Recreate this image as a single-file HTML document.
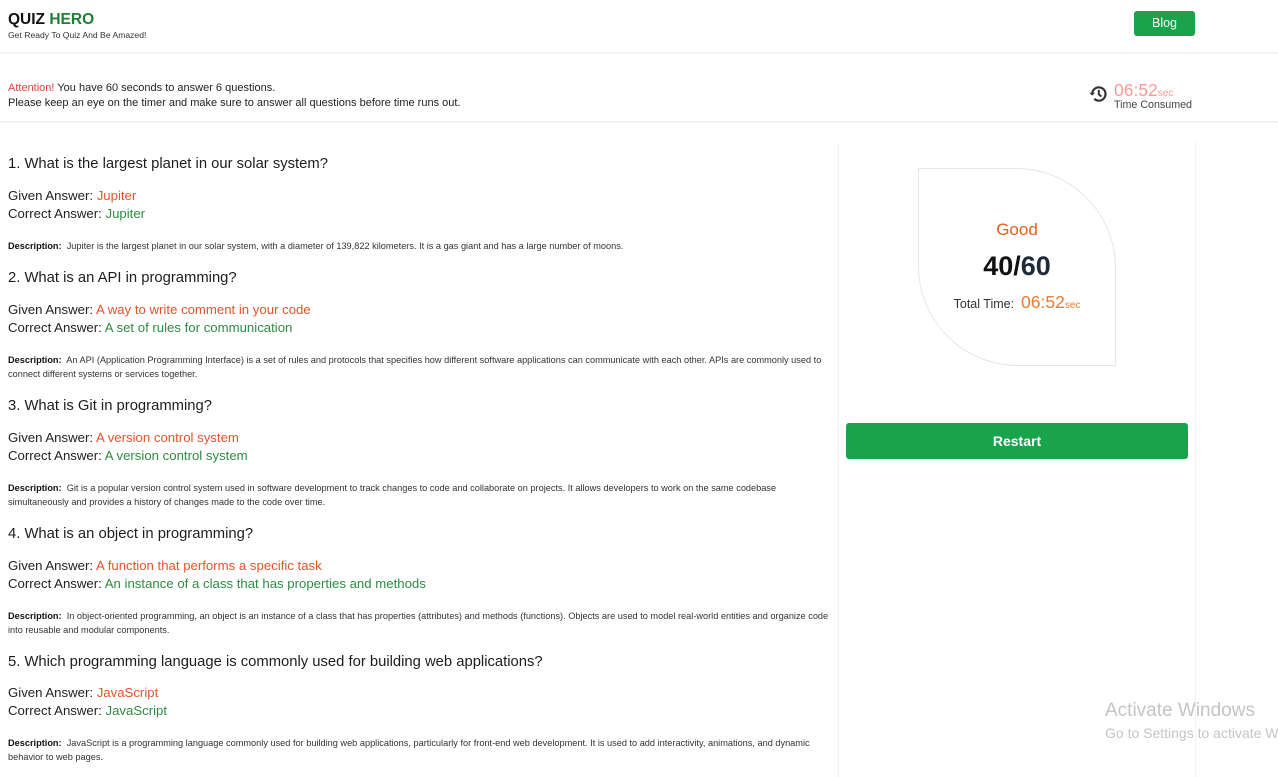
<!DOCTYPE html>
<html><head><meta charset="utf-8"><style>
*{margin:0;padding:0;box-sizing:border-box}
body{width:1278px;height:777px;overflow:hidden;background:#fff;font-family:"Liberation Sans",Arial,sans-serif;color:#222;position:relative}
.a{position:absolute;white-space:nowrap}
.q{font-size:14.8px;color:#1d1d1d}
.ans{font-size:13.2px;color:#222}
.g{color:#e0552b}.c{color:#2e8b43}
.d{font-size:9.2px;color:#333;line-height:14px;white-space:normal;width:830px}
.d b{color:#111}
</style></head><body>
<div class="a" style="left:8px;top:11px;font-size:15.5px;font-weight:bold;color:#111">QUIZ <span style="color:#1e7e34">HERO</span></div>
<div class="a" style="left:8px;top:30px;font-size:8.6px;color:#333">Get Ready To Quiz And Be Amazed!</div>
<div class="a" style="left:1134px;top:11px;width:61px;height:25px;background:#19a34a;border-radius:3px;color:#fff;font-size:12.5px;text-align:center;line-height:25px">Blog</div>
<div class="a" style="left:0;top:52px;width:1278px;height:2px;background:#f3f3f3"></div>
<div class="a" style="left:8px;top:81px;font-size:11px;color:#222;line-height:15px"><span style="color:#d9443f">Attention!</span> You have 60 seconds to answer 6 questions.<br>Please keep an eye on the timer and make sure to answer all questions before time runs out.</div>
<svg class="a" style="left:1088px;top:84px" width="20" height="20" viewBox="0 0 24 24"><path d="M5 12a8 8 0 1 1 2.5 5.8" fill="none" stroke="#333" stroke-width="2.6"/><path d="M1.5 10.5L5 14l3.5-3.5z" fill="#333"/><path d="M13 7v5.5l3 2.5" fill="none" stroke="#333" stroke-width="2.4"/></svg>
<div class="a" style="left:1114px;top:80px;font-size:17.5px;color:#f59a9a">06:52<span style="font-size:10px">sec</span></div>
<div class="a" style="left:1114px;top:99px;font-size:10.7px;color:#444">Time Consumed</div>
<div class="a" style="left:0;top:121px;width:1278px;height:2px;background:#f3f3f3"></div>
<div class="a" style="left:838px;top:142px;width:1px;height:635px;background:#f2f2f2"></div>
<div class="a" style="left:1195px;top:142px;width:1px;height:635px;background:#f2f2f2"></div>

<div class="a q" style="left:8px;top:156px">1. What is the largest planet in our solar system?</div>
<div class="a ans" style="left:8px;top:188px">Given Answer: <span class="g">Jupiter</span></div>
<div class="a ans" style="left:8px;top:206px">Correct Answer: <span class="c">Jupiter</span></div>
<div class="a d" style="left:8px;top:239px"><b>Description:</b>&nbsp; Jupiter is the largest planet in our solar system, with a diameter of 139,822 kilometers. It is a gas giant and has a large number of moons.</div>

<div class="a q" style="left:8px;top:270px">2. What is an API in programming?</div>
<div class="a ans" style="left:8px;top:302px">Given Answer: <span class="g">A way to write comment in your code</span></div>
<div class="a ans" style="left:8px;top:320px">Correct Answer: <span class="c">A set of rules for communication</span></div>
<div class="a d" style="left:8px;top:353px"><b>Description:</b>&nbsp; An API (Application Programming Interface) is a set of rules and protocols that specifies how different software applications can communicate with each other. APIs are commonly used to connect different systems or services together.</div>

<div class="a q" style="left:8px;top:398px">3. What is Git in programming?</div>
<div class="a ans" style="left:8px;top:430px">Given Answer: <span class="g">A version control system</span></div>
<div class="a ans" style="left:8px;top:448px">Correct Answer: <span class="c">A version control system</span></div>
<div class="a d" style="left:8px;top:481px"><b>Description:</b>&nbsp; Git is a popular version control system used in software development to track changes to code and collaborate on projects. It allows developers to work on the same codebase simultaneously and provides a history of changes made to the code over time.</div>

<div class="a q" style="left:8px;top:526px">4. What is an object in programming?</div>
<div class="a ans" style="left:8px;top:558px">Given Answer: <span class="g">A function that performs a specific task</span></div>
<div class="a ans" style="left:8px;top:576px">Correct Answer: <span class="c">An instance of a class that has properties and methods</span></div>
<div class="a d" style="left:8px;top:609px"><b>Description:</b>&nbsp; In object-oriented programming, an object is an instance of a class that has properties (attributes) and methods (functions). Objects are used to model real-world entities and organize code into reusable and modular components.</div>

<div class="a q" style="left:8px;top:654px">5. Which programming language is commonly used for building web applications?</div>
<div class="a ans" style="left:8px;top:685px">Given Answer: <span class="g">JavaScript</span></div>
<div class="a ans" style="left:8px;top:703px">Correct Answer: <span class="c">JavaScript</span></div>
<div class="a d" style="left:8px;top:736px"><b>Description:</b>&nbsp; JavaScript is a programming language commonly used for building web applications, particularly for front-end web development. It is used to add interactivity, animations, and dynamic behavior to web pages.</div>

<div class="a" style="left:918px;top:168px;width:198px;height:198px;border:1px solid #e6e6e6;border-radius:0 100px 0 100px"></div>
<div class="a" style="left:918px;top:220px;width:198px;text-align:center;font-size:17px;color:#e0611f">Good</div>
<div class="a" style="left:918px;top:251px;width:198px;text-align:center;font-size:27px;font-weight:bold;color:#111">40/<span style="color:#1f2a3a">60</span></div>
<div class="a" style="left:918px;top:292px;width:198px;text-align:center;font-size:12.5px;color:#333">Total Time:&nbsp; <span style="font-size:17.5px;color:#f07a2a">06:52<span style="font-size:10px">sec</span></span></div>
<div class="a" style="left:846px;top:423px;width:342px;height:36px;background:#19a34a;border-radius:3px;color:#fff;font-size:14px;font-weight:bold;text-align:center;line-height:36px">Restart</div>

<div class="a" style="left:1105px;top:700px;font-size:19px;color:#c4c4c4">Activate Windows</div>
<div class="a" style="left:1105px;top:725px;font-size:14px;color:#c4c4c4">Go to Settings to activate Windows.</div>
</body></html>
